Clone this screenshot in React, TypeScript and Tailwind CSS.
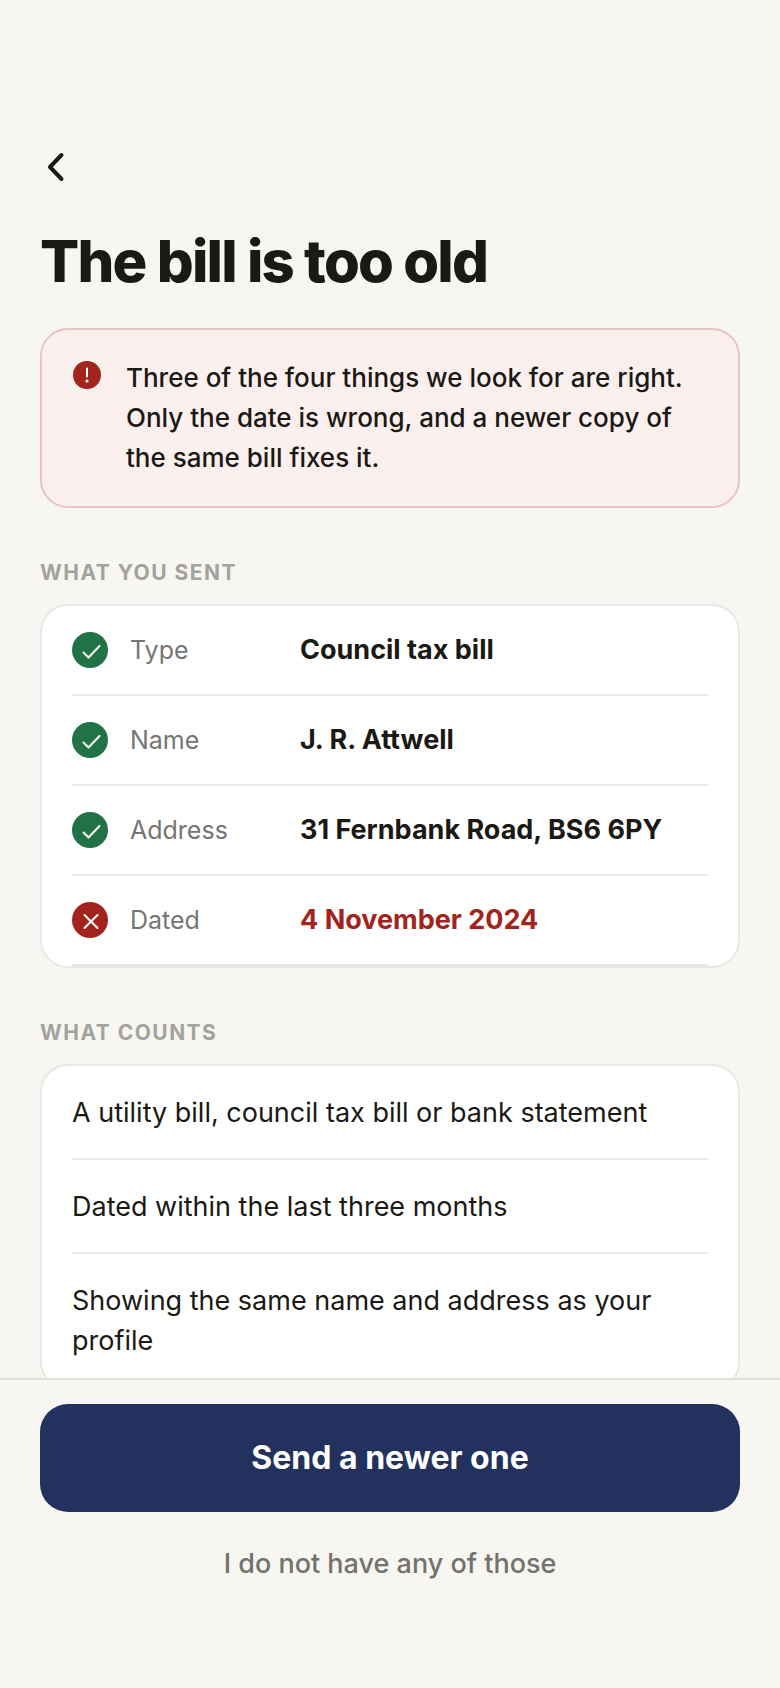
import React from 'react'

type Check = { label: string; value: string; ok: boolean }

const checks: Check[] = [
  { label: 'Type', value: 'Council tax bill', ok: true },
  { label: 'Name', value: 'J. R. Attwell', ok: true },
  { label: 'Address', value: '31 Fernbank Road, BS6 6PY', ok: true },
  { label: 'Dated', value: '4 November 2024', ok: false },
]

const rules = [
  'A utility bill, council tax bill or bank statement',
  'Dated within the last three months',
  'Showing the same name and address as your profile',
]

function StatusIcon({ ok }: { ok: boolean }) {
  return (
    <svg className="size-9 shrink-0" viewBox="0 0 36 36" fill="none" aria-hidden="true">
      <circle cx="18" cy="18" r="18" fill={ok ? '#217346' : '#a3241d'} />
      <path
        d={ok ? 'M11.5 20.5l5 5L27.5 14' : 'M12.5 13l13 13M25.5 13l-13 13'}
        stroke="#fff"
        strokeWidth="2"
        strokeLinecap="round"
        strokeLinejoin="round"
      />
    </svg>
  )
}

function SectionTitle({ children }: { children: React.ReactNode }) {
  return (
    <h2 className="mt-[50px] mb-4 text-[21px] leading-[30px] font-bold tracking-[0.07em] uppercase text-[#a3a29d]">
      {children}
    </h2>
  )
}

export default function App() {
  return (
    <div className="flex h-screen flex-col bg-[#f7f6f2] font-['Inter',sans-serif] text-[#1a1914]">
      <main className="min-h-0 flex-1 overflow-y-auto px-10 pt-[145px] pb-10 [scrollbar-width:none]">
        <button type="button" aria-label="Back" className="block size-11">
          <svg className="size-11" viewBox="0 0 44 44" fill="none" aria-hidden="true">
            <path d="M21.5 10L10 22l11.5 12" stroke="currentColor" strokeWidth="4" strokeLinecap="round" strokeLinejoin="round" />
          </svg>
        </button>

        <h1 className="mt-9 text-[58px] leading-[72px] font-extrabold tracking-[-0.03em]">The bill is too old</h1>

        <div role="alert" className="mt-[31px] flex gap-[22px] rounded-[28px] border-2 border-[#e8c4c2] bg-[#fcf0ee] p-7">
          <svg className="size-[34px] shrink-0" viewBox="0 0 34 34" fill="none" aria-hidden="true">
            <circle cx="17" cy="17" r="14" fill="#a3241d" />
            <path d="M17 10.5v8" stroke="#fff" strokeWidth="2" strokeLinecap="round" />
            <circle cx="17" cy="23" r="1.6" fill="#fff" />
          </svg>
          <p className="text-[26px] leading-10 font-medium">
            Three of the four things we look for are right. Only the date is wrong, and a newer copy of the same bill
            fixes it.
          </p>
        </div>

        <section>
          <SectionTitle>What you sent</SectionTitle>
          <dl className="rounded-[28px] border-2 border-[#e8e8e7] bg-white px-[30px]">
            {checks.map(c => (
              <div key={c.label} className="flex h-[90px] items-center border-b-2 border-[#e8e8e7]">
                <StatusIcon ok={c.ok} />
                <div className="ml-[22px] flex items-baseline">
                  <dt className="w-[170px] shrink-0 text-[25px] leading-10 text-[#757573]">{c.label}</dt>
                  <dd className={c.ok ? 'text-[27px] leading-10 font-bold' : 'text-[27px] leading-10 font-bold text-[#a3241d]'}>
                    {c.value}
                  </dd>
                </div>
              </div>
            ))}
          </dl>
        </section>

        <section>
          <SectionTitle>What counts</SectionTitle>
          <ul className="rounded-[28px] border-2 border-[#e8e8e7] bg-white px-[30px]">
            {rules.map(r => (
              <li key={r} className="border-b-2 border-[#e8e8e7] pt-[27px] pb-[25px] text-[27px] leading-10">
                {r}
              </li>
            ))}
          </ul>
        </section>
      </main>

      <footer className="border-t-2 border-[#dfdedb] px-10 pt-6 pb-[72px]">
        <button type="button" className="block h-[108px] w-full rounded-[28px] bg-[#22315d] text-[32px] font-bold text-white">
          Send a newer one
        </button>
        <button type="button" className="block h-[104px] w-full text-[27px] font-medium text-[#73726c]">
          I do not have any of those
        </button>
      </footer>
    </div>
  )
}
